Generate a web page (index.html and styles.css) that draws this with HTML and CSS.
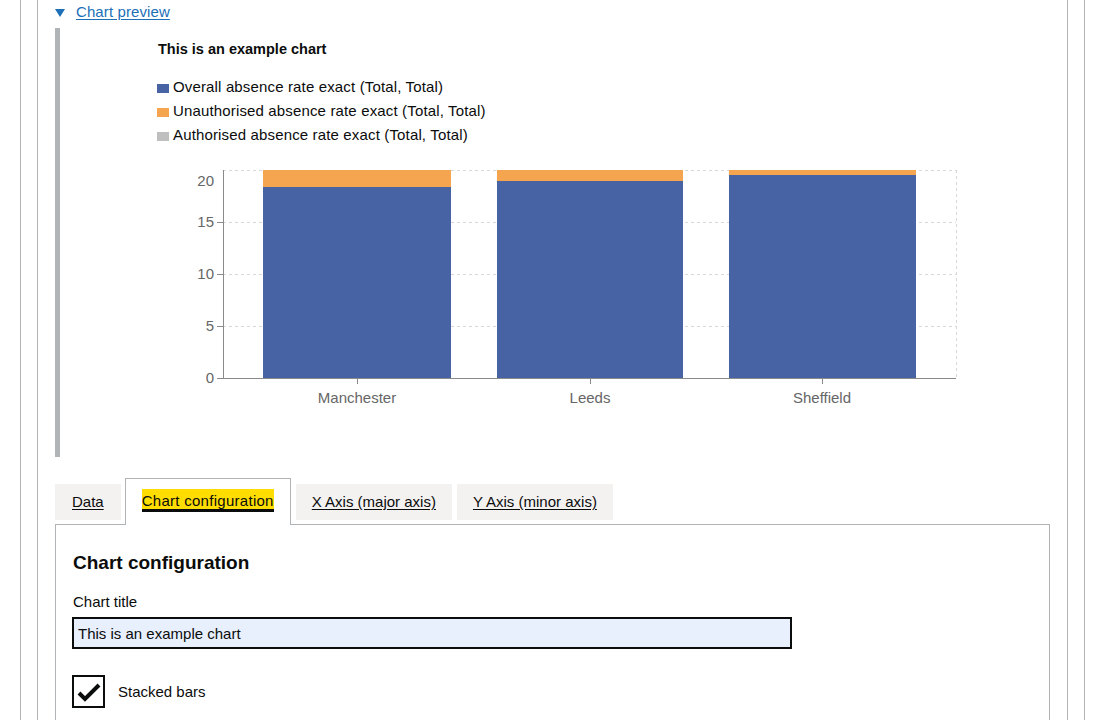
FILE: index.html
```html
<!DOCTYPE html>
<html lang="en">
<head>
<meta charset="utf-8">
<title>Chart configuration</title>
<link rel="stylesheet" href="styles.css">
</head>
<body>
<div class="outer">
  <div class="inner">
    <div class="summary">
      <svg class="caret" width="10" height="8" viewBox="0 0 10 8"><polygon points="0,0 10,0 5,8" fill="#1d70b8"/></svg>
      <a class="summary-link" href="#">Chart preview</a>
    </div>
    <div class="preview">
      <div class="chart-title">This is an example chart</div>
      <ul class="legend">
        <li><span class="swatch swatch-blue"></span>Overall absence rate exact (Total, Total)</li>
        <li><span class="swatch swatch-orange"></span>Unauthorised absence rate exact (Total, Total)</li>
        <li><span class="swatch swatch-grey"></span>Authorised absence rate exact (Total, Total)</li>
      </ul>
      <svg class="chart" width="790" height="250" viewBox="0 0 790 250">
        <g stroke="#d8d8d8" stroke-dasharray="3 3" stroke-width="1">
          <line x1="43" y1="10.5" x2="776" y2="10.5"/>
          <line x1="43" y1="62.5" x2="776" y2="62.5"/>
          <line x1="43" y1="114.5" x2="776" y2="114.5"/>
          <line x1="43" y1="166.5" x2="776" y2="166.5"/>
          <line x1="776.5" y1="10" x2="776.5" y2="218"/>
        </g>
        <g>
          <rect x="83" y="27" width="188" height="191" fill="#4763a4"/>
          <rect x="83" y="10" width="188" height="17" fill="#f5a450"/>
          <rect x="317" y="21" width="186" height="197" fill="#4763a4"/>
          <rect x="317" y="10" width="186" height="11" fill="#f5a450"/>
          <rect x="549" y="15" width="187" height="203" fill="#4763a4"/>
          <rect x="549" y="10" width="187" height="5" fill="#f5a450"/>
        </g>
        <g stroke="#8a8a8a" stroke-width="1">
          <line x1="43.5" y1="10" x2="43.5" y2="218"/>
          <line x1="43" y1="218.5" x2="776" y2="218.5"/>
          <line x1="37" y1="62.5" x2="43" y2="62.5"/>
          <line x1="37" y1="114.5" x2="43" y2="114.5"/>
          <line x1="37" y1="166.5" x2="43" y2="166.5"/>
          <line x1="37" y1="218.5" x2="43" y2="218.5"/>
          <line x1="177.5" y1="218" x2="177.5" y2="224"/>
          <line x1="410.5" y1="218" x2="410.5" y2="224"/>
          <line x1="642.5" y1="218" x2="642.5" y2="224"/>
        </g>
        <g class="axis-text" text-anchor="end">
          <text x="34" y="26">20</text>
          <text x="34" y="67">15</text>
          <text x="34" y="119">10</text>
          <text x="34" y="171">5</text>
          <text x="34" y="223">0</text>
        </g>
        <g class="axis-text" text-anchor="middle">
          <text x="177" y="243">Manchester</text>
          <text x="410" y="243">Leeds</text>
          <text x="642" y="243">Sheffield</text>
        </g>
      </svg>
    </div>
    <ul class="tabs">
      <li class="tab tab-first"><a href="#">Data</a></li>
      <li class="tab tab-selected"><a class="focused" href="#">Chart configuration</a></li>
      <li class="tab"><a href="#">X Axis (major axis)</a></li>
      <li class="tab"><a href="#">Y Axis (minor axis)</a></li>
    </ul>
    <div class="panel">
      <h2 class="panel-heading">Chart configuration</h2>
      <label class="field-label" for="title">Chart title</label>
      <input class="text-input" id="title" type="text" value="This is an example chart">
      <div class="checkbox-row">
        <span class="checkbox">
          <svg width="29" height="29" viewBox="0 0 29 29"><polyline points="5,16 11,22 25,8" fill="none" stroke="#0b0c0c" stroke-width="4"/></svg>
        </span>
        <span class="checkbox-label">Stacked bars</span>
      </div>
    </div>
  </div>
</div>
</body>
</html>
```
FILE: styles.css
```css
* { box-sizing: border-box; }
html, body { margin: 0; padding: 0; }
body {
  font-family: "Liberation Sans", Arial, sans-serif;
  font-size: 15px;
  color: #0b0c0c;
  background: #fff;
  overflow: hidden;
}
.outer {
  margin-left: 20px;
  width: 1065px;
  min-height: 720px;
  border-left: 1px solid #b1b4b6;
  border-right: 1px solid #b1b4b6;
  padding: 0 16px;
}
.inner {
  min-height: 720px;
  border-left: 1px solid #b1b4b6;
  border-right: 1px solid #b1b4b6;
  padding: 0 17px;
}
.summary {
  display: flex;
  align-items: center;
  padding-top: 2px;
  height: 22px;
  line-height: 20px;
}
.caret { margin-right: 11px; margin-top: 1px; }
.summary-link {
  color: #1d70b8;
  text-decoration: underline;
  text-underline-offset: 2px;
  letter-spacing: 0.1px;
}
.preview {
  margin-top: 6px;
  border-left: 5px solid #b1b4b6;
  padding: 11px 0 47px 97px;
}
.chart-title {
  font-weight: bold;
  font-size: 14.5px;
  line-height: 20px;
  padding-left: 1px;
}
.legend {
  list-style: none;
  margin: 16px 0 0;
  padding: 0;
}
.legend li {
  display: flex;
  align-items: center;
  height: 24px;
  line-height: 24px;
  letter-spacing: 0.15px;
}
.swatch {
  display: inline-block;
  width: 12px;
  height: 9px;
  margin-right: 4px;
  margin-top: 2px;
}
.swatch-blue { background: #4763a4; }
.swatch-orange { background: #f5a450; }
.swatch-grey { background: #bfbfbf; }
.chart {
  display: block;
  margin: 13px 0 0 23px;
}
.axis-text text {
  font-family: "Liberation Sans", Arial, sans-serif;
  font-size: 15px;
  fill: #666;
}
.tabs {
  list-style: none;
  margin: 21px 0 0;
  padding: 0;
  display: flex;
  align-items: flex-end;
}
.tab {
  background: #f3f2f1;
  padding: 8px 16px;
  line-height: 20px;
  margin-right: 5px;
  margin-bottom: 4px;
}
.tab-first {
  padding: 8px 17px;
  margin-right: 4px;
}
.tab a {
  color: #0b0c0c;
  text-decoration: underline;
  text-underline-offset: 2px;
}
.tab-selected {
  background: #fff;
  border: 1px solid #b1b4b6;
  border-bottom: 0;
  padding: 12px 16px 14px;
  margin-bottom: -1px;
  position: relative;
  z-index: 1;
}
.tab a.focused {
  background: #ffdd00;
  box-shadow: 0 -3px #ffdd00, 0 3px #0b0c0c;
  text-decoration: none;
  outline: none;
  letter-spacing: 0.28px;
}
.panel {
  border: 1px solid #b1b4b6;
  padding: 26px 16px 40px;
  min-height: 220px;
}
.panel-heading {
  margin: 0;
  font-size: 19px;
  line-height: 24px;
  font-weight: bold;
  padding-left: 1px;
}
.field-label {
  display: block;
  margin-top: 17px;
  line-height: 20px;
  padding-left: 1px;
}
.text-input {
  display: block;
  margin-top: 5px;
  width: 720px;
  height: 32px;
  border: 2px solid #0b0c0c;
  background: #e8f0fd;
  padding: 0 4px;
  font-family: "Liberation Sans", Arial, sans-serif;
  font-size: 15px;
  color: #0b0c0c;
  border-radius: 0;
}
.checkbox-row {
  display: flex;
  align-items: center;
  margin-top: 26px;
}
.checkbox {
  width: 33px;
  height: 33px;
  border: 2px solid #0b0c0c;
  display: flex;
  align-items: center;
  justify-content: center;
}
.checkbox-label {
  margin-left: 13px;
  line-height: 20px;
}
```
